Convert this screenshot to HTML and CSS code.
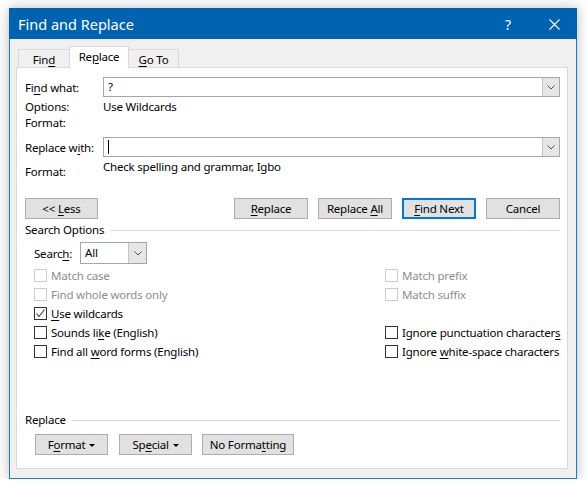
FILE: index.html
```html
<!DOCTYPE html>
<html>
<head>
<meta charset="utf-8">
<link rel="stylesheet" href="styles.css">
</head>
<body>
<div class="dialog">
  <div class="titlebar">
    <span class="title">Find and Replace</span>
    <span class="tb-btn help">?</span>
    <span class="tb-btn close"><svg width="11" height="11" viewBox="0 0 11 11"><path d="M0.5 0.5 L10.5 10.5 M10.5 0.5 L0.5 10.5" stroke="#fff" stroke-width="1.1" fill="none"/></svg></span>
  </div>
  <div class="tabs">
    <div class="tab t-find"><span>Fin<u>d</u></span></div>
    <div class="tab t-replace active"><span>Re<u>p</u>lace</span></div>
    <div class="tab t-goto"><span><u>G</u>o To</span></div>
  </div>
  <div class="panel">
    <div class="field-row r-find">
      <span class="lbl">Fi<u>n</u>d what:</span>
      <div class="combo"><span class="combo-val">?</span><span class="drop"><svg width="8" height="5" viewBox="0 0 8 5"><path d="M0.5 0.5 L4 4 L7.5 0.5" stroke="#505050" fill="none"/></svg></span></div>
    </div>
    <div class="info-row r-opt"><span class="lbl">Options:</span><span>Use Wildcards</span></div>
    <div class="info-row"><span class="lbl">Format:</span></div>
    <div class="field-row r-repl">
      <span class="lbl">Replace w<u>i</u>th:</span>
      <div class="combo"><span class="combo-val"><span class="caret"></span></span><span class="drop"><svg width="8" height="5" viewBox="0 0 8 5"><path d="M0.5 0.5 L4 4 L7.5 0.5" stroke="#505050" fill="none"/></svg></span></div>
    </div>
    <div class="fmt-row"><span class="lbl fmt-lbl">Format:</span><span class="fmt-val">Check spelling and grammar, Igbo</span></div>
    <div class="btn-row">
      <button class="btn less">&lt;&lt; <u>L</u>ess</button>
      <button class="btn"><u>R</u>eplace</button>
      <button class="btn">Replace <u>A</u>ll</button>
      <button class="btn default"><u>F</u>ind Next</button>
      <button class="btn">Cancel</button>
    </div>
    <div class="section"><span>Search Options</span><span class="rule"></span></div>
    <div class="search-row">
      <span class="search-lbl">Searc<u>h</u>:</span>
      <div class="select"><span class="select-val">All</span><span class="drop"><svg width="8" height="5" viewBox="0 0 8 5"><path d="M0.5 0.5 L4 4 L7.5 0.5" stroke="#505050" fill="none"/></svg></span></div>
    </div>
    <div class="checks">
      <div class="chk disabled"><span class="box"></span><span class="txt">Match case</span></div>
      <div class="chk disabled"><span class="box"></span><span class="txt">Match prefix</span></div>
      <div class="chk disabled"><span class="box"></span><span class="txt">Find whole words only</span></div>
      <div class="chk disabled"><span class="box"></span><span class="txt">Match suffix</span></div>
      <div class="chk"><span class="box"><svg width="11" height="11" viewBox="0 0 11 11"><path d="M1.5 5.5 L4 8.5 L9.5 1.5" stroke="#333" stroke-width="1.1" fill="none"/></svg></span><span class="txt"><u>U</u>se wildcards</span></div>
      <div class="chk empty"></div>
      <div class="chk"><span class="box"></span><span class="txt">Sounds li<u>k</u>e (English)</span></div>
      <div class="chk"><span class="box"></span><span class="txt">Ignore punctuation character<u>s</u></span></div>
      <div class="chk"><span class="box"></span><span class="txt">Find all <u>w</u>ord forms (English)</span></div>
      <div class="chk"><span class="box"></span><span class="txt">Ignore <u>w</u>hite-space characters</span></div>
    </div>
    <div class="section replace-sec"><span>Replace</span><span class="rule"></span></div>
    <div class="bottom-row">
      <button class="btn small">F<u>o</u>rmat <span class="tri"></span></button>
      <button class="btn small">Sp<u>e</u>cial <span class="tri"></span></button>
      <button class="btn nofmt">No Forma<u>t</u>ting</button>
    </div>
  </div>
</div>
</body>
</html>
```
FILE: styles.css
```css
* { box-sizing: border-box; }
html, body { margin: 0; padding: 0; }
body {
  background: #ffffff;
  font-family: "Noto Sans", "Open Sans", sans-serif;
  font-size: 11.5px;
  letter-spacing: -0.2px;
  color: #000;
}
u { text-decoration: underline; text-underline-offset: 2px; text-decoration-thickness: 1px; }

.dialog {
  margin: 8px 0 0 9px;
  width: 568px;
  height: 471px;
  border: 1px solid #1979ca;
  background: #f0f0f0;
  box-shadow: 0 0 12px rgba(0,0,0,0.28);
  display: flex;
  flex-direction: column;
}

.titlebar {
  background: #0063b1;
  color: #fff;
  display: flex;
  align-items: center;
  margin: -1px -1px 0 -1px;
  padding-top: 1px;
  height: 31px;
}
.title {
  flex: 1;
  padding-left: 9px;
  font-size: 14.5px;
  letter-spacing: 0;
}
.tb-btn {
  width: 46px;
  height: 30px;
  display: flex;
  align-items: center;
  justify-content: center;
}
.help { font-size: 14px; letter-spacing: 0; }

.tabs {
  display: flex;
  align-items: flex-end;
  margin: 7px 0 0 8px;
  height: 21px;
}
.tab {
  height: 18px;
  border: 1px solid #d9d9d9;
  border-bottom: none;
  background: #f0f0f0;
  display: flex;
  align-items: center;
  justify-content: center;
  padding-top: 1px;
}
.t-find { width: 51px; border-right: none; }
.t-replace { width: 60px; }
.t-goto { width: 50px; border-left: none; }
.tab.active {
  height: 22px;
  margin-bottom: -1px;
  background: #fff;
  position: relative;
  z-index: 1;
  padding-top: 0;
  padding-bottom: 2px;
}

.panel {
  flex: 1;
  margin: 0 8px 9px 6px;
  background: #fff;
  border: 1px solid #d9d9d9;
  padding: 0 7px 0 8px;
}

.lbl { width: 78px; flex: none; }

.field-row {
  display: flex;
  align-items: center;
  height: 20px;
}
.r-find { margin-top: 9px; }
.r-repl { margin-top: 6px; }
.combo {
  flex: 1;
  height: 20px;
  border: 1px solid #a6a6a6;
  display: flex;
  background: #fff;
}
.combo-val {
  flex: 1;
  padding-left: 4px;
  line-height: 18px;
  display: flex;
  align-items: center;
}
.caret { width: 1px; height: 14px; background: #000; }
.drop {
  width: 17px;
  background: #e6e6e6;
  border-left: 1px solid #c4c4c4;
  display: flex;
  align-items: center;
  justify-content: center;
}

.info-row {
  display: flex;
  height: 16px;
  line-height: 16px;
}
.r-opt { margin-top: 2px; }

.fmt-row {
  display: flex;
  height: 23px;
  line-height: 16px;
}
.fmt-lbl { padding-top: 7px; }
.fmt-val { padding-top: 2px; }

.btn {
  font-family: inherit;
  font-size: 11.5px;
  letter-spacing: -0.2px;
  color: #000;
  background: #e1e1e1;
  border: 1px solid #adadad;
  height: 21px;
  width: 74px;
  padding: 0;
  margin: 0;
  line-height: 18px;
}
.btn-row {
  display: flex;
  gap: 10px;
  margin-top: 18px;
}
.less { margin-right: auto; width: 73px; }
.btn.default { border: 2px solid #0078d7; }

.section {
  display: flex;
  align-items: center;
  height: 16px;
  line-height: 16px;
  margin-top: 3px;
}
.rule {
  flex: 1;
  height: 1px;
  background: #dadada;
  margin-left: 6px;
}

.search-row {
  display: flex;
  align-items: center;
  margin-top: 4px;
  padding-left: 9px;
}
.search-lbl { width: 46px; }
.select {
  width: 67px;
  height: 22px;
  border: 1px solid #a6a6a6;
  display: flex;
}
.select-val { flex: 1; padding-left: 4px; line-height: 20px; }
.select .drop { width: 18px; }

.checks {
  display: grid;
  grid-template-columns: 351px 1fr;
  grid-auto-rows: 19px;
  margin-top: 2px;
  padding-left: 9px;
}
.chk {
  display: flex;
  align-items: center;
  white-space: nowrap;
}
.box {
  width: 13px;
  height: 13px;
  flex: none;
  border: 1px solid #333;
  margin-right: 4px;
  display: flex;
  align-items: center;
  justify-content: center;
  background: #fff;
}
.chk.disabled { color: #8d8d8d; }
.chk.disabled .box { border-color: #cccccc; }

.replace-sec { margin-top: 51px; }

.bottom-row {
  display: flex;
  gap: 10px;
  margin-top: 6px;
  padding-left: 10px;
}
.btn.small { width: 73px; }
.btn.small + .btn.small { margin-left: 1px; }
.btn.nofmt { width: 92px; }
.tri {
  display: inline-block;
  width: 0; height: 0;
  border-left: 3px solid transparent;
  border-right: 3px solid transparent;
  border-top: 3px solid #000;
  vertical-align: middle;
  margin-left: 1px;
}
```
